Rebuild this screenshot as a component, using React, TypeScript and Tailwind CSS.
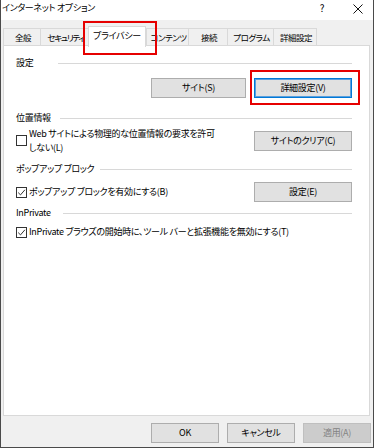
import React from 'react';

const font = "font-['Noto_Sans_CJK_JP',sans-serif] [font-feature-settings:'palt'] text-[9px] tracking-[-0.3px] text-black";

function Tab({ label, w, selected, tight }: { label: string; w: string; selected?: boolean; tight?: boolean }) {
  if (selected) {
    return (
      <div className={`${w} relative z-10 -mb-px flex h-[21px] items-center justify-center whitespace-nowrap border border-b-0 border-[#d9d9d9] bg-white pb-[2px]`}>
        {label}
      </div>
    );
  }
  return (
    <div className={`${w} mb-[1px] flex h-[17px] items-center justify-center whitespace-nowrap border-t border-l border-[#d9d9d9] bg-[#f0f0f0] pl-[2px] text-[8.5px] last:border-r`}>
      <span className={tight ? 'tracking-[-1.3px]' : 'tracking-[-0.5px]'}>{label}</span>
    </div>
  );
}

function Heading({ label, w }: { label: string; w: string }) {
  return (
    <div className="flex h-[16px] items-center">
      <span className={`${w} shrink-0 whitespace-nowrap`}>{label}</span>
      <div className="h-px flex-1 bg-[#d8d8d8]" />
    </div>
  );
}

function Box({ checked }: { checked?: boolean }) {
  return (
    <span className="flex h-[11px] w-[11px] shrink-0 items-center justify-center border border-[#333] bg-white">
      {checked ? (
        <svg width="9" height="9" viewBox="0 0 9 9">
          <path d="M1.2 4.6 L3.5 6.9 L7.9 1.8" fill="none" stroke="#333" strokeWidth="1" />
        </svg>
      ) : null}
    </span>
  );
}

function Btn({ children, w, focused, disabled }: { children: React.ReactNode; w: string; focused?: boolean; disabled?: boolean }) {
  const tone = disabled
    ? 'border-[#bfbfbf] bg-[#cccccc] text-[#838383]'
    : focused
      ? 'border-[#0078d7] bg-[#e1e1e1] shadow-[inset_0_0_0_1px_#5a9fdc]'
      : 'border-[#adadad] bg-[#e1e1e1]';
  return (
    <div className={`${w} ${tone} flex h-[20px] shrink-0 items-center justify-center whitespace-nowrap border`}>{children}</div>
  );
}

export default function App() {
  return (
    <div className={`${font} relative flex h-[448px] w-[374px] flex-col border-x border-b border-[#4a4a4a] bg-[#f0f0f0] leading-[14px]`}>
      {/* title bar */}
      <div className="flex h-[20px] items-start bg-white">
        <span className="mt-px pl-[1px] text-[9px]">インターネット オプション</span>
        <span className="ml-auto mt-px w-[10px] text-center text-[10px]">?</span>
        <svg className="ml-[26px] mr-[10px] mt-[4px]" width="10" height="10" viewBox="0 0 10 10">
          <path d="M0.5 0.5 L9.5 9.5 M9.5 0.5 L0.5 9.5" stroke="#111" strokeWidth="1" />
        </svg>
      </div>

      {/* tabs */}
      <div className="mt-[5px] ml-[2px] -mb-px flex h-[21px] items-end">
        <Tab label="全般" w="w-[37px]" />
        <Tab label="セキュリティ" w="w-[48px]" tight />
        <Tab label="プライバシー" w="w-[58px]" selected />
        <Tab label="コンテンツ" w="w-[42px]" />
        <Tab label="接続" w="w-[39px]" />
        <Tab label="プログラム" w="w-[46px]" />
        <Tab label="詳細設定" w="w-[44px]" />
      </div>

      {/* panel */}
      <div className="ml-[2px] mr-[3px] flex h-[371px] flex-col border border-[#d9d9d9] bg-white pt-[9px] pl-[12px] pr-[17px]">
        <Heading label="設定" w="w-[42px]" />
        <div className="mt-[7px] flex justify-end gap-[8px]">
          <Btn w="w-[95px]">サイト(S)</Btn>
          <Btn w="w-[98px]" focused>詳細設定(V)</Btn>
        </div>

        <div className="mt-[12px]">
          <Heading label="位置情報" w="w-[44px]" />
        </div>
        <div className="mt-px flex items-start">
          <span className="mt-[8px]">
            <Box />
          </span>
          <span className="ml-[2px]">
            Web サイトによる物理的な位置情報の要求を許可
            <br />
            しない(L)
          </span>
          <div className="ml-auto mt-[4px]">
            <Btn w="w-[98px]">サイトのクリア(C)</Btn>
          </div>
        </div>

        <div className="mt-[6px]">
          <Heading label="ポップアップ ブロック" w="w-[84px]" />
        </div>
        <div className="mt-[5px] flex items-center">
          <Box checked />
          <span className="ml-[2px]">ポップアップ ブロックを有効にする(B)</span>
          <div className="ml-auto">
            <Btn w="w-[98px]">設定(E)</Btn>
          </div>
        </div>

        <div className="mt-[3px]">
          <Heading label="InPrivate" w="w-[47px]" />
        </div>
        <div className="mt-[4px] flex h-[14px] items-center">
          <Box checked />
          <span className="ml-[2px]">InPrivate ブラウズの開始時に、ツール バーと拡張機能を無効にする(T)</span>
        </div>
      </div>

      {/* bottom buttons */}
      <div className="flex justify-end gap-[8px] pt-[7px] pr-[2px]">
        <Btn w="w-[68px]">OK</Btn>
        <Btn w="w-[68px]">キャンセル</Btn>
        <Btn w="w-[68px]" disabled>適用(A)</Btn>
      </div>

      {/* red annotation boxes */}
      <div className="pointer-events-none absolute left-[82px] top-[21px] h-[34px] w-[74px] border-2 border-[#e60000]" />
      <div className="pointer-events-none absolute left-[249px] top-[70px] h-[35px] w-[110px] border-2 border-[#e60000]" />
    </div>
  );
}
